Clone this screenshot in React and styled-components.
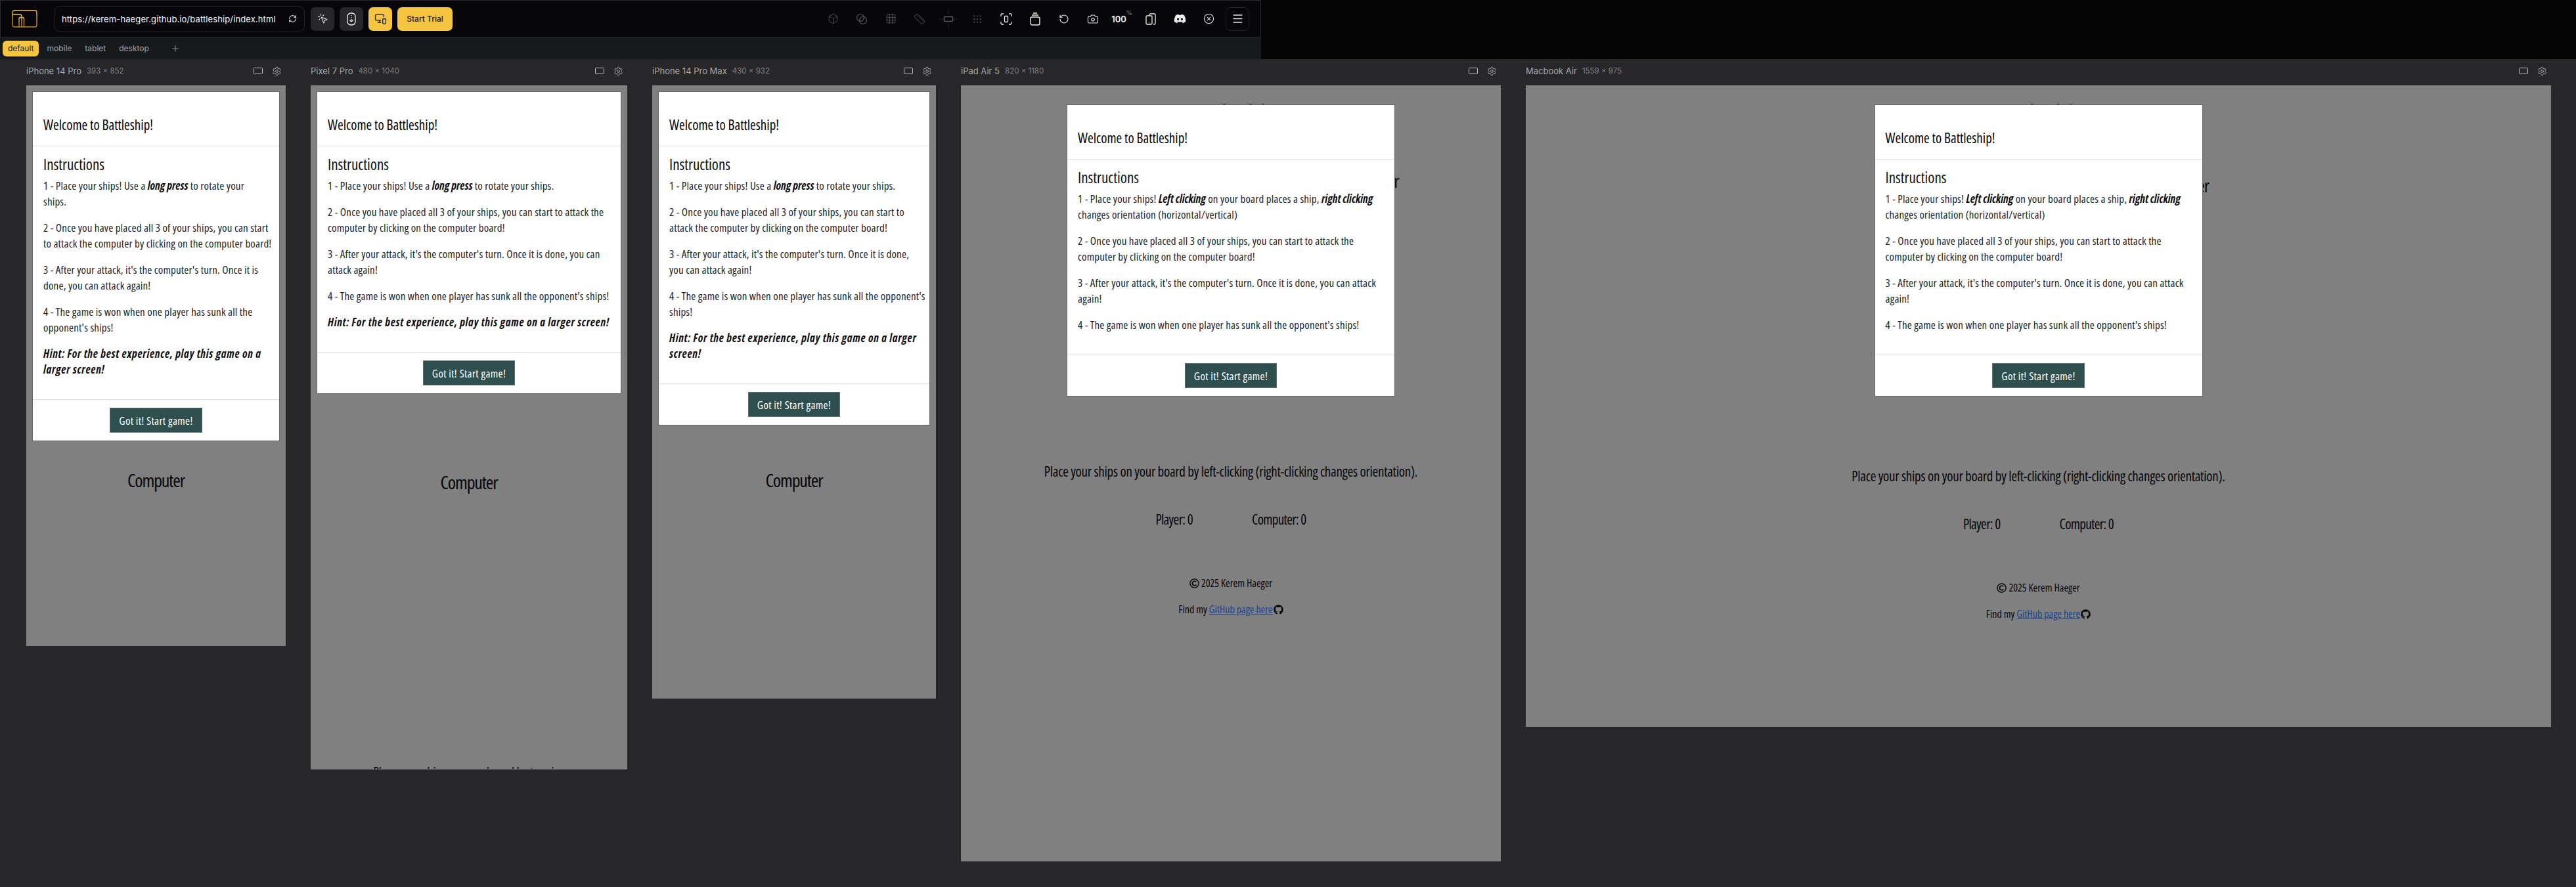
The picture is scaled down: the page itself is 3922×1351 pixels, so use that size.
import React from 'react';
import styled, { createGlobalStyle } from 'styled-components';
import { Box, Grid3x3, Ruler, Grip, RotateCcw, Camera, CircleX, Menu, MousePointerClick, MonitorSmartphone, RefreshCw, Settings, Plus } from 'lucide-react';
import { FaDiscord, FaGithub, FaRegCopyright } from 'react-icons/fa';

const Narrow = `"Open Sans", "Liberation Sans", sans-serif`;
const Ui = `Inter, "Noto Sans", sans-serif`;

const Global = createGlobalStyle`
  html, body { margin: 0; padding: 0; background: #27272a; }
  body { width: 3922px; height: 1351px; overflow: hidden; font-family: ${Ui}; }
`;

const Shell = styled.div`display: flex; flex-direction: column; width: 3922px; height: 1351px; background: #27272a;`;
const TopBand = styled.div`display: flex; height: 90px; background: #050506;`;
const TopLeft = styled.div`width: 1920px; display: flex; flex-direction: column;`;
const Toolbar = styled.div`
  height: 57px; box-sizing: border-box; display: flex; align-items: center; padding: 0 13px 0 17px;
  background: #07070a; border: 1px solid #2a2a2d;
`;
const Logo = styled.svg`width: 40px; height: 28px; flex: none; margin-right: 24px;`;
const UrlBox = styled.div`
  width: 382px; height: 40px; box-sizing: border-box; flex: none; display: flex; align-items: center; justify-content: space-between;
  padding: 0 11px; border: 1px solid #232326; border-radius: 10px; margin-right: 9px;
  color: #f4f6fa; font-size: 13px; letter-spacing: 0.11px;
`;
const ModeButton = styled.div`
  width: 36px; height: 36px; flex: none; display: flex; align-items: center; justify-content: center; border-radius: 7px; margin-right: 8px;
  background: ${p => (p.$on ? '#f5c542' : '#27272a')}; color: ${p => (p.$on ? '#1a1a1a' : '#f0f0f0')};
`;
const TrialButton = styled.div`
  width: 84px; height: 36px; flex: none; display: flex; align-items: center; justify-content: center; border-radius: 7px;
  background: #f5c542; color: #1c1a12; font-size: 12px; font-weight: 500;
`;
const ToolGroup = styled.div`margin-left: auto; display: flex; align-items: center;`;
const ToolSlot = styled.div`
  width: 44px; height: 36px; display: flex; align-items: center; justify-content: center; color: ${p => (p.$dim ? '#5a5a5e' : '#eeeeee')};
  position: relative;
`;
const MenuBox = styled.div`
  width: 36px; height: 36px; display: flex; align-items: center; justify-content: center; border: 1px solid #232326; border-radius: 8px; box-sizing: border-box; margin: 0 4px; color: #e8e8e8;
`;
const Zoom = styled.span`font-size: 13px; font-weight: 600; color: #f4f4f4; display: flex; align-items: flex-start;`;
const ZoomUnit = styled.sup`font-size: 9px; color: #77777a; line-height: 1; margin-top: -6px; font-weight: 500;`;

const TabRow = styled.div`flex: 1; display: flex; align-items: center; padding-left: 4px; gap: 4px; background: #18191b;`;
const Tab = styled.div`
  height: 24px; display: flex; align-items: center; padding: 0 8px; border-radius: 6px; font-size: 12px;
  background: ${p => (p.$on ? '#f5c542' : 'transparent')}; color: ${p => (p.$on ? '#1c1a12' : '#a3a3a6')};
`;
const AddTab = styled.div`margin-left: 21px; color: #8a8a8d; display: flex;`;

const Canvas = styled.div`flex: 1; display: flex; gap: 38px; padding-left: 40px; align-items: flex-start;`;
const Column = styled.div`display: flex; flex-direction: column; width: ${p => p.$w + 2}px; flex: none;`;
const FrameHead = styled.div`height: 40px; box-sizing: border-box; padding: 0 6px 4px 0; display: flex; align-items: center; gap: 6px;`;
const FrameName = styled.span`font-size: 13px; color: #a8a8ab;`;
const FrameSize = styled.span`font-size: 11.5px; color: #808083; margin-left: 2px;`;
const FrameIcons = styled.div`margin-left: auto; display: flex; align-items: center; gap: 14px; color: #b4b4b6;`;
const RectIcon = styled.div`width: 12px; height: 8px; border: 1px solid #c4c4c6; border-radius: 1.5px;`;

const Frame = styled.div`
  position: relative; box-sizing: border-box; overflow: hidden; border: 1px solid #808080;
  width: ${p => p.$w + 2}px; height: ${p => p.$h + 2}px; background: #808080; color: #060608;
  font-family: ${Narrow}; font-stretch: 75%;
`;
const Page = styled.div`display: flex; flex-direction: column; align-items: center; padding-top: 19px;`;
const SiteTitle = styled.div`font-size: 42px; line-height: 48px; white-space: nowrap;`;
const Boards = styled.div`
  display: flex; justify-content: center; margin-top: ${p => p.$top}px; gap: ${p => p.$gap}px;
  flex-direction: ${p => (p.$stack ? 'column' : 'row')};
`;
const Board = styled.div`width: ${p => p.$w}px; display: flex; flex-direction: column; align-items: center;`;
const BoardLabel = styled.div`font-size: 28px; line-height: 48px; letter-spacing: -0.04em;`;
const BoardArea = styled.div`height: ${p => p.$h}px;`;
const Status = styled.div`font-size: 21px; line-height: 36px; letter-spacing: -0.012em; text-align: center; white-space: nowrap;`;
const Scores = styled.div`display: flex; gap: 90px; margin-top: 37px; font-size: 21px; line-height: 36px; letter-spacing: -0.03em;`;
const SiteFooter = styled.div`margin-top: 67px; display: flex; flex-direction: column; align-items: center; gap: 16px; font-size: 16px; line-height: 24px;`;
const FootLine = styled.div`display: flex; align-items: center; white-space: pre;`;
const CopyMark = styled(FaRegCopyright)`margin-right: 3px;`;
const FootLink = styled.span`color: #1b4391; text-decoration: underline;`;
const GithubMark = styled(FaGithub)`margin-left: 1px;`;

const Modal = styled.div`
  position: absolute; left: 0; right: 0; margin: 0 auto; top: ${p => p.$top}px; width: ${p => p.$w}px; box-sizing: border-box;
  background: #fff; border: 1px solid #676767; color: #212529;
`;
const ModalHead = styled.div`padding: 36px 16px 17px; border-bottom: 1px solid #dee2e6;`;
const ModalTitle = styled.div`font-size: 21px; line-height: 29px; color: #050505; white-space: nowrap;`;
const ModalBody = styled.div`padding: 16px 16px 17px;`;
const BodyTitle = styled.div`font-size: 23px; line-height: 24px; margin-bottom: 9px; margin-top: -1px; color: #111;`;
const Para = styled.p`margin: 0 0 16px; font-size: 17px; line-height: 24px; white-space: nowrap; letter-spacing: 0.01em;`;
const Emph = styled.em`font-weight: 700; color: #0c0c0c; letter-spacing: 0;`;
const Hint = styled(Emph)`letter-spacing: 0.042em;`;
const ModalFoot = styled.div`border-top: 1px solid #dee2e6; padding: 12px; display: flex; justify-content: center;`;
const StartButton = styled.div`
  height: 38px; box-sizing: border-box; display: flex; align-items: center; padding: 0 13px; border: 1px solid #5c7070;
  background: #2f4f4f; color: #fff; font-size: 17px; letter-spacing: 0.02em; white-space: nowrap;
`;

const COPY = {
  p393: [
    <>1 - Place your ships! Use a <Emph>long press</Emph> to rotate your<br />ships.</>,
    <>2 - Once you have placed all 3 of your ships, you can start<br />to attack the computer by clicking on the computer board!</>,
    <>3 - After your attack, it's the computer's turn. Once it is<br />done, you can attack again!</>,
    <>4 - The game is won when one player has sunk all the<br />opponent's ships!</>,
    <Hint>Hint: For the best experience, play this game on a<br />larger screen!</Hint>,
  ],
  p480: [
    <>1 - Place your ships! Use a <Emph>long press</Emph> to rotate your ships.</>,
    <>2 - Once you have placed all 3 of your ships, you can start to attack the<br />computer by clicking on the computer board!</>,
    <>3 - After your attack, it's the computer's turn. Once it is done, you can<br />attack again!</>,
    <>4 - The game is won when one player has sunk all the opponent's ships!</>,
    <Hint>Hint: For the best experience, play this game on a larger screen!</Hint>,
  ],
  p430: [
    <>1 - Place your ships! Use a <Emph>long press</Emph> to rotate your ships.</>,
    <>2 - Once you have placed all 3 of your ships, you can start to<br />attack the computer by clicking on the computer board!</>,
    <>3 - After your attack, it's the computer's turn. Once it is done,<br />you can attack again!</>,
    <>4 - The game is won when one player has sunk all the opponent's<br />ships!</>,
    <Hint>Hint: For the best experience, play this game on a larger<br />screen!</Hint>,
  ],
  wide: [
    <>1 - Place your ships! <Emph>Left clicking</Emph> on your board places a ship, <Emph>right clicking</Emph><br />changes orientation (horizontal/vertical)</>,
    <>2 - Once you have placed all 3 of your ships, you can start to attack the<br />computer by clicking on the computer board!</>,
    <>3 - After your attack, it's the computer's turn. Once it is done, you can attack<br />again!</>,
    <>4 - The game is won when one player has sunk all the opponent's ships!</>,
  ],
};

const DEVICES = [
  { name: 'iPhone 14 Pro', w: 393, h: 852, copy: 'p393', stack: true, area: 408, top: 53 },
  { name: 'Pixel 7 Pro', w: 480, h: 1040, copy: 'p480', stack: true, area: 411, top: 53 },
  { name: 'iPhone 14 Pro Max', w: 430, h: 932, copy: 'p430', stack: true, area: 408, top: 53 },
  { name: 'iPad Air 5', w: 820, h: 1180, copy: 'wide', area: 401, top: 53, gap: 24 },
  { name: 'Macbook Air', w: 1559, h: 975, copy: 'wide', area: 401, top: 60, gap: 32 },
];

const TwoCircles = () => (
  <svg width="18" height="18" viewBox="0 0 18 18" fill="none" stroke="currentColor" strokeWidth="1.2">
    <circle cx="7" cy="7" r="5.5" /><circle cx="11" cy="11" r="5.5" />
  </svg>
);
const Measure = () => (
  <svg width="28" height="28" viewBox="0 0 28 28" fill="none" stroke="currentColor">
    <path d="M0 14h7M21 14h7M14 0v7M14 21v7" strokeWidth=".6" opacity=".6" />
    <rect x="7.5" y="10.5" width="13" height="7" rx="1" strokeWidth="1.3" />
  </svg>
);
const ScanFrame = () => (
  <svg width="18" height="18" viewBox="0 0 18 18" fill="none" stroke="currentColor" strokeWidth="1.3">
    <path d="M1 5V2.5A1.5 1.5 0 0 1 2.5 1H5M13 1h2.5A1.5 1.5 0 0 1 17 2.5V5M17 13v2.5a1.5 1.5 0 0 1-1.500 1.500H13M5 17H2.500A1.500 1.500 0 0 1 1 15.500V13" />
    <rect x="6.500" y="4.500" width="5" height="9" rx="1" />
  </svg>
);
const Stack = () => (
  <svg width="16" height="20" viewBox="0 0 16 20" fill="none" stroke="currentColor" strokeWidth="1.400">
    <path d="M5 1h6M3 4h10" /><rect x="1" y="7" width="14" height="12" rx="2.500" />
  </svg>
);
const Devices = () => (
  <svg width="16" height="18" viewBox="0 0 16 18" fill="none" stroke="currentColor" strokeWidth="1.300">
    <path d="M6 3V2.500A1.500 1.500 0 0 1 7.500 1h6A1.500 1.500 0 0 1 15 2.500v13a1.500 1.500 0 0 1-1.500 1.500H12" />
    <rect x="1" y="4" width="9" height="13" rx="1.500" /><path d="M5 14h1" />
  </svg>
);
const MouseDown = () => (
  <svg width="14" height="20" viewBox="0 0 14 20" fill="none" stroke="currentColor" strokeWidth="1.300">
    <rect x="1" y="1" width="12" height="18" rx="5" />
    <path d="M7 4v1M7 7v1M7 10v2M4.500 11.500 7 14l2.500-2.500" />
  </svg>
);

const DeviceView = ({ d }) => {
  const mobile = d.stack;
  return (
    <Column $w={d.w}>
      <FrameHead>
        <FrameName>{d.name}</FrameName>
        <FrameSize>{d.w} x {d.h}</FrameSize>
        <FrameIcons><RectIcon /><Settings size={15} strokeWidth={1.500} /></FrameIcons>
      </FrameHead>
      <Frame $w={d.w} $h={d.h}>
        <Page>
          <SiteTitle>Battleship</SiteTitle>
          <Boards $stack={d.stack} $top={d.top} $gap={d.gap || 0}>
            <Board $w={400}><BoardLabel>Player</BoardLabel><BoardArea $h={d.area} /></Board>
            <Board $w={400}><BoardLabel>Computer</BoardLabel><BoardArea $h={400} /></Board>
          </Boards>
          <Status>
            {mobile
              ? <>Place your ships on your board by tapping<br />(long press changes orientation).</>
              : 'Place your ships on your board by left-clicking (right-clicking changes orientation).'}
          </Status>
          <Scores><span>Player: 0</span><span>Computer: 0</span></Scores>
          <SiteFooter>
            <FootLine><CopyMark size={15} />2025 Kerem Haeger</FootLine>
            <FootLine>Find my <FootLink>GitHub page here</FootLink><GithubMark size={15} /></FootLine>
          </SiteFooter>
        </Page>
        <Modal $w={mobile ? d.w - 16 : 500} $top={mobile ? 8 : 28}>
          <ModalHead><ModalTitle>Welcome to Battleship!</ModalTitle></ModalHead>
          <ModalBody>
            <BodyTitle>Instructions</BodyTitle>
            {COPY[d.copy].map((c, i) => <Para key={i}>{c}</Para>)}
          </ModalBody>
          <ModalFoot><StartButton>Got it! Start game!</StartButton></ModalFoot>
        </Modal>
      </Frame>
    </Column>
  );
};

export default function App() {
  return (
    <Shell>
      <Global />
      <TopBand>
        <TopLeft>
          <Toolbar>
            <Logo viewBox="0 0 40 28" fill="none">
              <defs>
                <linearGradient id="lg" x1="0" y1="0" x2="0" y2="1">
                  <stop offset="0" stopColor="#f6c945" /><stop offset="1" stopColor="#c08a17" />
                </linearGradient>
              </defs>
              <rect x="1" y="1" width="37" height="25" rx="3" stroke="url(#lg)" strokeWidth="1.300" />
              <path d="M1 7h11a3 3 0 0 1 3 3v16" stroke="url(#lg)" strokeWidth="1.300" />
              <path d="M11 26V14a2.500 2.500 0 0 1 2.500-2.500h2.500a2.500 2.500 0 0 1 2.500 2.500v12" stroke="url(#lg)" strokeWidth="1.300" />
            </Logo>
            <UrlBox>https://kerem-haeger.github.io/battleship/index.html<RefreshCw size={13} strokeWidth={2} color="#d8d8d8" /></UrlBox>
            <ModeButton><MousePointerClick size={17} strokeWidth={1.500} /></ModeButton>
            <ModeButton><MouseDown /></ModeButton>
            <ModeButton $on><MonitorSmartphone size={19} strokeWidth={1.700} /></ModeButton>
            <TrialButton>Start Trial</TrialButton>
            <ToolGroup>
              <ToolSlot $dim><Box size={17} strokeWidth={1.200} /></ToolSlot>
              <ToolSlot $dim><TwoCircles /></ToolSlot>
              <ToolSlot $dim><Grid3x3 size={17} strokeWidth={1.200} /></ToolSlot>
              <ToolSlot $dim><Ruler size={18} strokeWidth={1.200} /></ToolSlot>
              <ToolSlot $dim><Measure /></ToolSlot>
              <ToolSlot $dim><Grip size={16} strokeWidth={1.400} /></ToolSlot>
              <ToolSlot><ScanFrame /></ToolSlot>
              <ToolSlot><Stack /></ToolSlot>
              <ToolSlot><RotateCcw size={16} strokeWidth={1.600} /></ToolSlot>
              <ToolSlot><Camera size={18} strokeWidth={1.500} /></ToolSlot>
              <ToolSlot><Zoom>100<ZoomUnit>%</ZoomUnit></Zoom></ToolSlot>
              <ToolSlot><Devices /></ToolSlot>
              <ToolSlot><FaDiscord size={19} /></ToolSlot>
              <ToolSlot><CircleX size={17} strokeWidth={1.500} /></ToolSlot>
              <MenuBox><Menu size={19} strokeWidth={1.800} /></MenuBox>
            </ToolGroup>
          </Toolbar>
          <TabRow>
            <Tab $on>default</Tab><Tab>mobile</Tab><Tab>tablet</Tab><Tab>desktop</Tab>
            <AddTab><Plus size={14} /></AddTab>
          </TabRow>
        </TopLeft>
      </TopBand>
      <Canvas>{DEVICES.map(d => <DeviceView key={d.name} d={d} />)}</Canvas>
    </Shell>
  );
}
